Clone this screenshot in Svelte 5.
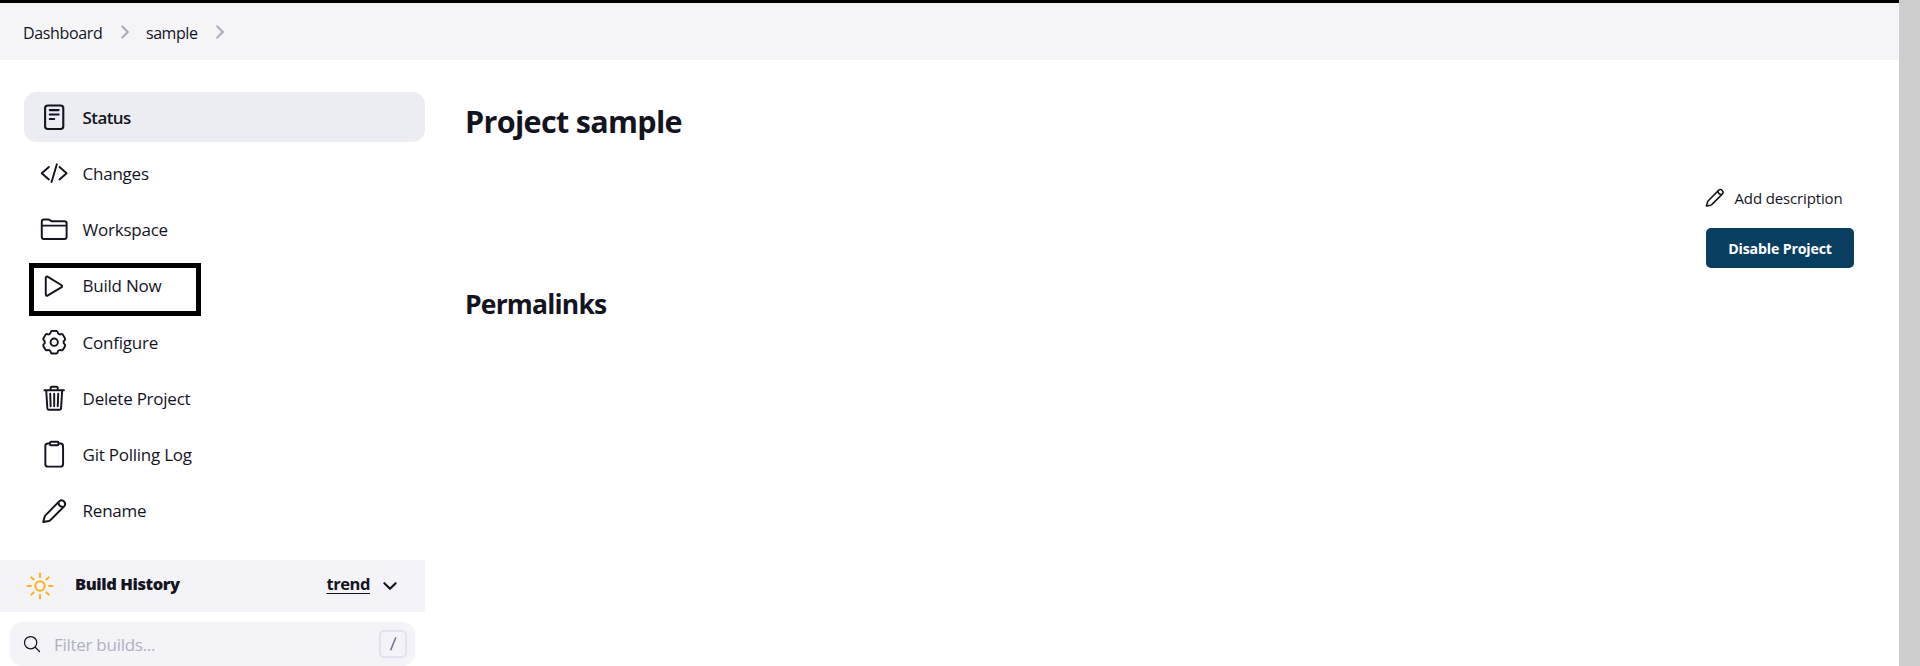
<script>
  const sideItems = [
    { icon: 'reader', label: 'Status', active: true },
    { icon: 'code', label: 'Changes' },
    { icon: 'folder', label: 'Workspace' },
    { icon: 'play', label: 'Build Now', marked: true },
    { icon: 'gear', label: 'Configure' },
    { icon: 'trash', label: 'Delete Project' },
    { icon: 'clipboard', label: 'Git Polling Log' },
    { icon: 'pencil', label: 'Rename' }
  ];

  // Six rounded teeth; each tooth is a flat arc joined to its neighbour by a shallow valley.
  function gearPath() {
    const at = (deg, r) => {
      const a = (deg * Math.PI) / 180;
      return `${(256 + r * Math.sin(a)).toFixed(1)} ${(256 - r * Math.cos(a)).toFixed(1)}`;
    };
    let d = `M${at(-11, 207)}`;
    for (let k = 0; k < 6; k++) {
      const a = k * 60;
      d += `Q${at(a, 205)} ${at(a + 11, 207)}Q${at(a + 18, 206)} ${at(a + 20, 188)}Q${at(a + 22, 170)} ${at(a + 30, 170)}Q${at(a + 38, 170)} ${at(a + 40, 188)}Q${at(a + 42, 206)} ${at(a + 49, 207)}`;
    }
    return d + 'Z';
  }
  const gear = gearPath();
</script>

{#snippet icon(name)}
  <svg class="icon" viewBox="0 0 512 512" aria-hidden="true">
    {#if name === 'reader'}
      <rect x="92" y="44" width="328" height="424" rx="48" />
      <path d="M176 128h160M176 208h160M176 288h80" />
    {:else if name === 'code'}
      <path d="M160 368L32 256l128-112M352 368l128-112-128-112M304 96l-96 320" />
    {:else if name === 'folder'}
      <path d="M440 432H72a40 40 0 01-40-40V120a40 40 0 0140-40h75.89a40 40 0 0122.19 6.72l27.84 18.56a40 40 0 0022.19 6.72H440a40 40 0 0140 40v240a40 40 0 01-40 40zM32 192h448" />
    {:else if name === 'play'}
      <path d="M104 105v302c0 17.44 17 28.52 31 20.16l255.9-154.37c12.12-7.25 12.12-26.33 0-33.58L135 84.84c-14-8.36-31 2.72-31 20.16z" />
    {:else if name === 'gear'}
      <path d={gear} />
      <circle cx="256" cy="256" r="66" />
    {:else if name === 'trash'}
      <path d="M112 112l20 320c.95 18.49 14.4 32 32 32h184c17.67 0 30.87-13.51 32-32l20-320M80 112h352M192 112V72a23.93 23.93 0 0124-24h80a23.93 23.93 0 0124 24v40M256 176v224M184 176l8 224M328 176l-8 224" />
    {:else if name === 'clipboard'}
      <path d="M336 64h32a48 48 0 0148 48v320a48 48 0 01-48 48H144a48 48 0 01-48-48V112a48 48 0 0148-48h32" />
      <rect x="176" y="32" width="160" height="64" rx="26" />
    {:else if name === 'pencil'}
      <path d="M58 452L84 358Q89 339 102 326L346 80A63 63 0 01435 169L190 414Q177 427 159 432ZM336 90Q330 180 427 179" />
    {:else if name === 'sun'}
      <path d="M256 48v48M256 416v48M403.08 108.92l-33.94 33.94M142.86 369.14l-33.94 33.94M464 256h-48M96 256H48M403.08 403.08l-33.94-33.94M142.86 142.86l-33.94-33.94" />
      <circle cx="256" cy="256" r="80" />
    {:else if name === 'search'}
      <circle cx="221" cy="221" r="157" />
      <path d="M338 338L448 448" />
    {:else if name === 'next'}
      <path d="M184 112l144 144-144 144" />
    {:else if name === 'down'}
      <path d="M112 184l144 144 144-144" />
    {/if}
  </svg>
{/snippet}

<div class="page">
  <div class="app">
    <header class="crumbs">
      <a>Dashboard</a>
      {@render icon('next')}
      <a class="second">sample</a>
      {@render icon('next')}
    </header>

    <div class="body">
      <aside>
        <nav>
          {#each sideItems as item}
            <a class="task" class:active={item.active}>
              {@render icon(item.icon)}
              <span>{item.label}</span>
              {#if item.marked}<i class="marker"></i>{/if}
            </a>
          {/each}
        </nav>

        <section class="history">
          <span class="weather">{@render icon('sun')}</span>
          <b>Build History</b>
          <a class="trend">trend</a>
          <span class="toggle">{@render icon('down')}</span>
        </section>

        <div class="search">
          {@render icon('search')}
          <span class="placeholder">Filter builds...</span>
          <kbd><svg viewBox="0 0 24 24"><path d="M14.8 5.4L9.6 18.4" /></svg></kbd>
        </div>
      </aside>

      <main>
        <h1>Project sample</h1>
        <div class="actions">
          <a class="describe">{@render icon('pencil')}<span>Add description</span></a>
          <button>Disable Project</button>
        </div>
        <h2>Permalinks</h2>
      </main>
    </div>
  </div>
  <div class="gutter"></div>
</div>

<style>
  :global(body) { background: #fff; overflow: hidden; }
  .page {
    display: flex;
    height: 666px;
    overflow: hidden;
    color: #14141f;
    font-family: "Open Sans", "Noto Sans", sans-serif;
    font-size: 17px;
  }
  .app { flex: 1; min-width: 0; }
  .gutter { width: 21px; background: #cdcdcd; }
  .icon {
    display: block;
    flex: none;
    width: 30px;
    height: 30px;
    fill: none;
    stroke: currentColor;
    stroke-width: 32;
    stroke-linecap: round;
    stroke-linejoin: round;
  }

  .crumbs {
    box-sizing: border-box;
    display: flex;
    align-items: center;
    height: 60px;
    padding: 0 0 0 23px;
    border-top: 3px solid #000;
    background: #f5f5f8;
    font-size: 16px;
    line-height: 24px;
    letter-spacing: -0.34px;
  }
  .crumbs a { width: 92px; padding-top: 3px; }
  .crumbs a.second { width: 64px; margin-left: 11px; letter-spacing: -0.45px; }
  .crumbs .icon { width: 20px; height: 20px; stroke-width: 54; color: #a9a9bb; }

  .body { display: flex; }
  aside { width: 425px; }
  nav {
    display: flex;
    flex-direction: column;
    gap: 6.25px;
    padding: 32px 0 24px 24px;
  }
  .task {
    position: relative;
    display: flex;
    align-items: center;
    gap: 14.4px;
    height: 50px;
    padding-left: 15.8px;
    border-radius: 12.5px;
    letter-spacing: -0.24px;
  }
  .task .icon { width: 28.4px; height: 28.4px; stroke-width: 35; }
  .task span { padding-top: 1.4px; line-height: 24px; }
  .task.active { background: #ecedf3; font-weight: 600; letter-spacing: -0.6px; }
  .task.active .icon { stroke-width: 38; }
  .marker {
    position: absolute;
    left: 5px;
    top: 2px;
    box-sizing: border-box;
    width: 172px;
    height: 53px;
    border: 5px solid #000;
  }

  .history {
    display: flex;
    align-items: center;
    height: 52px;
    background: #f3f3f8;
    font-size: 16.5px;
    font-weight: 700;
    letter-spacing: -0.42px;
  }
  .weather { padding-left: 25px; color: #ffb21a; }
  .weather .icon { stroke-linecap: square; stroke-width: 35; }
  .history b { padding-left: 20px; margin-top: -4px; }
  .trend {
    margin: -4px 0 0 auto;
    text-decoration: underline;
    text-decoration-thickness: 1px;
    text-underline-offset: 3px;
  }
  .toggle { padding: 0 25px 0 10px; }
  .toggle .icon { width: 20px; height: 20px; stroke-width: 56; }

  .search {
    box-sizing: border-box;
    display: flex;
    align-items: center;
    height: 44px;
    margin: 10px 10px 0;
    padding: 0 8px 0 12px;
    border-radius: 12.5px;
    background: #f3f3f8;
  }
  .search .icon { width: 20px; height: 20px; }
  .placeholder { flex: 1; padding-left: 12px; padding-top: 1px; color: #b0b0c2; letter-spacing: -0.28px; }
  kbd {
    box-sizing: border-box;
    width: 28px;
    height: 28px;
    border: 2px solid #e3e3ed;
    border-radius: 5px;
  }
  kbd svg { display: block; width: 24px; height: 24px; fill: none; stroke: #77778c; stroke-width: 1.5; }

  main { flex: 1; padding: 36px 45px 0 40px; }
  h1, h2 { margin: 0; font-weight: 700; }
  h1 { height: 50px; font-size: 30.5px; line-height: 50px; letter-spacing: -0.66px; }
  h2 { margin-top: 16px; font-size: 26.5px; line-height: 40px; letter-spacing: -0.82px; }
  .actions { width: 148px; margin: 33px 0 0 auto; }
  .describe {
    display: flex;
    align-items: center;
    gap: 9px;
    height: 38px;
    padding-left: 4px;
    margin-left: -6px;
    font-size: 15px;
    letter-spacing: -0.14px;
    white-space: nowrap;
  }
  .describe .icon { width: 21.5px; height: 21.5px; stroke-width: 36; }
  button {
    display: block;
    width: 148px;
    height: 40px;
    margin-top: 11px;
    padding: 0;
    border: 0;
    border-radius: 5px;
    background: #083f61;
    color: #fff;
    font: 700 14.2px "Open Sans", "Noto Sans", sans-serif;
    letter-spacing: -0.17px;
  }
</style>
